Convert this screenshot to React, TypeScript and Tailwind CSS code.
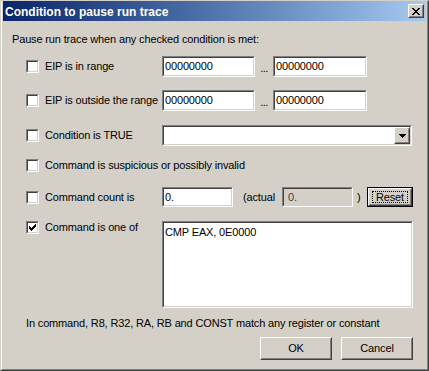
import React from "react";

const raisedOuter =
  "border border-t-white border-l-white border-r-[#404040] border-b-[#404040]";
const raisedInner =
  "border border-t-[#d4d0c8] border-l-[#d4d0c8] border-r-[#808080] border-b-[#808080]";
const sunkOuter =
  "border border-t-[#808080] border-l-[#808080] border-r-white border-b-white";
const sunkInner =
  "border border-t-[#404040] border-l-[#404040] border-r-[#d4d0c8] border-b-[#d4d0c8]";

function Pixels({ rows, w, h, ox = 0, oy = 0 }: { rows: string[]; w: number; h: number; ox?: number; oy?: number }) {
  const rects: React.ReactNode[] = [];
  rows.forEach((r, y) =>
    r.split("").forEach((c, x) => {
      if (c === "X") rects.push(<rect key={x + "-" + y} x={x + ox} y={y + oy} width={1} height={1} fill="#000" />);
    })
  );
  return (
    <svg width={w} height={h} viewBox={`0 0 ${w} ${h}`} shapeRendering="crispEdges">
      {rects}
    </svg>
  );
}

const CHECK = ["......X", ".....XX", "X...XXX", "XX.XXX.", "XXXXX..", ".XXX...", "..X...."];
const CLOSE = ["XX....XX", ".XX..XX.", "..XXXX..", "...XX...", "..XXXX..", ".XX..XX.", "XX....XX"];
const ARROW = ["XXXXXXX", ".XXXXX.", "..XXX..", "...X..."];

function Checkbox({ checked }: { checked?: boolean }) {
  return (
    <div className={`w-[13px] h-[13px] shrink-0 ${sunkOuter}`}>
      <div className={`w-full h-full bg-white ${sunkInner}`}>
        {checked && <Pixels rows={CHECK} w={9} h={9} ox={1} oy={1} />}
      </div>
    </div>
  );
}

function Field({
  className,
  children,
  grey,
  pad = "pl-[1px]",
}: {
  className: string;
  children?: React.ReactNode;
  grey?: boolean;
  pad?: string;
}) {
  return (
    <div className={`shrink-0 ${sunkOuter} ${className}`}>
      <div className={`w-full h-full flex items-center ${pad} ${grey ? "bg-[#d4d0c8]" : "bg-white"} ${sunkInner}`}>
        {children}
      </div>
    </div>
  );
}

function Button({
  className,
  children,
  isDefault,
}: {
  className: string;
  children: React.ReactNode;
  isDefault?: boolean;
}) {
  if (isDefault) {
    return (
      <div className={`shrink-0 border border-black ${className}`}>
        <div className={`w-full h-full ${raisedOuter}`}>
          <div className={`w-full h-full flex items-center justify-center ${raisedInner}`}>
            <div className="border border-dotted border-black px-[3px] leading-[10px] h-[12px] flex items-center">
              {children}
            </div>
          </div>
        </div>
      </div>
    );
  }
  return (
    <div className={`shrink-0 ${raisedOuter} ${className}`}>
      <div className={`w-full h-full flex items-center justify-center ${raisedInner}`}>{children}</div>
    </div>
  );
}

function Label({ checked, text }: { checked?: boolean; text: string }) {
  return (
    <div className="w-[136px] shrink-0 flex items-center">
      <Checkbox checked={checked} />
      <span className="ml-[6px] whitespace-nowrap">{text}</span>
    </div>
  );
}

export default function App() {
  return (
    <div className="w-[429px] h-[371px] bg-[#d4d0c8] text-black text-[11px] leading-[13px] tracking-[-0.15px] font-['Liberation_Sans',Arial,sans-serif] border border-t-[#d4d0c8] border-l-[#d4d0c8] border-r-[#404040] border-b-[#404040] border-t-[1px] overflow-hidden">
      <div className="w-full h-full border-l border-r border-b border-t-0 border-l-white border-r-[#808080] border-b-[#808080] px-px pb-px flex flex-col">
        {/* title bar */}
        <div className="h-[20px] shrink-0 bg-gradient-to-r from-[#0a246a] to-[#a6caf0] flex items-center justify-between pl-[2px] pr-[2px]">
          <span className="text-white font-bold text-[12px] tracking-normal pt-[2px] whitespace-nowrap">
            Condition to pause run trace
          </span>
          <div className={`w-[16px] h-[14px] bg-[#d4d0c8] ${raisedOuter}`}>
            <div className={`w-full h-full flex items-center justify-center ${raisedInner}`}>
              <Pixels rows={CLOSE} w={8} h={7} />
            </div>
          </div>
        </div>

        {/* body */}
        <div className="flex flex-col">
          <div className="ml-[9px] mt-[12px] whitespace-nowrap">
            Pause run trace when any checked condition is met:
          </div>

          <div className="ml-[23px] mt-[10px] h-[21px] flex items-center">
            <Label text="EIP is in range" />
            <Field className="w-[93px] h-[21px]">00000000</Field>
            <span className="w-[18px] text-center tracking-[-0.5px] pt-[4px]">...</span>
            <Field className="w-[94px] h-[21px]">00000000</Field>
          </div>

          <div className="ml-[23px] mt-[13px] h-[21px] flex items-center">
            <Label text="EIP is outside the range" />
            <Field className="w-[93px] h-[21px]">00000000</Field>
            <span className="w-[18px] text-center tracking-[-0.5px] pt-[4px]">...</span>
            <Field className="w-[94px] h-[21px]">00000000</Field>
          </div>

          <div className="ml-[23px] mt-[14px] h-[21px] flex items-center">
            <Label text="Condition is TRUE" />
            <Field className="w-[250px] h-[21px]" pad="pl-0">
              <div className="flex-1" />
              <div className={`w-[16px] h-full bg-[#d4d0c8] ${raisedOuter}`}>
                <div className={`w-full h-full flex items-center justify-center ${raisedInner}`}>
                  <Pixels rows={ARROW} w={7} h={4} />
                </div>
              </div>
            </Field>
          </div>

          <div className="ml-[23px] mt-[9px] h-[20px] flex items-center">
            <Checkbox />
            <span className="ml-[6px] whitespace-nowrap">Command is suspicious or possibly invalid</span>
          </div>

          <div className="ml-[23px] mt-[12px] h-[20px] flex items-center">
            <Label text="Command count is" />
            <Field className="w-[71px] h-[20px]">0.</Field>
            <span className="ml-[10px] w-[39px] whitespace-nowrap">(actual</span>
            <Field className="w-[71px] h-[20px]" grey pad="pl-[4px]">
              <span className="text-[#404040]">0.</span>
            </Field>
            <span className="ml-[4px] w-[10px]">)</span>
            <Button className="w-[46px] h-[20px]" isDefault>
              Reset
            </Button>
          </div>

          <div className="ml-[23px] mt-[14px] h-[87px] flex items-start">
            <div className="w-[136px] shrink-0 flex items-center h-[12px]">
              <Checkbox checked />
              <span className="ml-[6px] whitespace-nowrap">Command is one of</span>
            </div>
            <div className={`w-[251px] h-[87px] shrink-0 ${sunkOuter}`}>
              <div className={`w-full h-full bg-white pl-[1px] pt-[3px] ${sunkInner}`}>CMP EAX, 0E0000</div>
            </div>
          </div>

          <div className="ml-[23px] mt-[9px] whitespace-nowrap">
            In command, R8, R32, RA, RB and CONST match any register or constant
          </div>

          <div className="mt-[7px] flex justify-end gap-[9px] pr-[13px]">
            <Button className="w-[72px] h-[23px]">OK</Button>
            <Button className="w-[72px] h-[23px]">Cancel</Button>
          </div>
        </div>
      </div>
    </div>
  );
}
